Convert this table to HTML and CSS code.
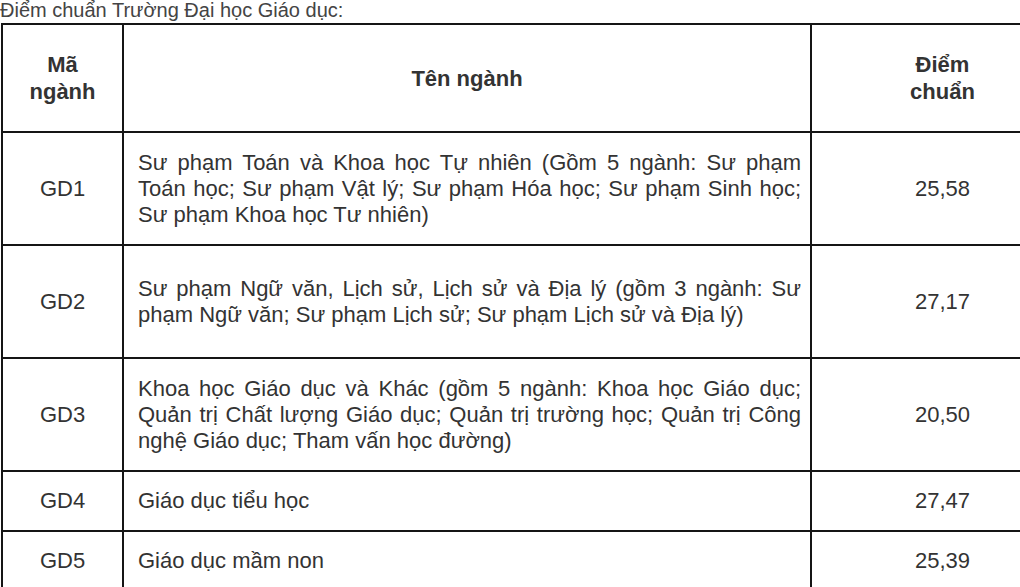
FILE: index.html
```html
<!DOCTYPE html>
<html lang="vi">
<head>
<meta charset="utf-8">
<title>Điểm chuẩn Trường Đại học Giáo dục</title>
<link rel="stylesheet" href="styles.css">
</head>
<body>
<div class="frame">
<p class="caption">Điểm chuẩn Trường Đại học Giáo dục:</p>
<table class="scores">
  <colgroup>
    <col class="c-code">
    <col class="c-name">
    <col class="c-score">
  </colgroup>
  <thead>
    <tr class="r-head">
      <th>Mã<br>ngành</th>
      <th>Tên ngành</th>
      <th>Điểm<br>chuẩn</th>
    </tr>
  </thead>
  <tbody>
    <tr class="r-tall">
      <td class="code">GD1</td>
      <td class="name">Sư phạm Toán và Khoa học Tự nhiên (Gồm 5 ngành: Sư phạm Toán học; Sư phạm Vật lý; Sư phạm Hóa học; Sư phạm Sinh học; Sư phạm Khoa học Tư nhiên)</td>
      <td class="score">25,58</td>
    </tr>
    <tr class="r-tall">
      <td class="code">GD2</td>
      <td class="name">Sư phạm Ngữ văn, Lịch sử, Lịch sử và Địa lý (gồm 3 ngành: Sư phạm Ngữ văn; Sư phạm Lịch sử; Sư phạm Lịch sử và Địa lý)</td>
      <td class="score">27,17</td>
    </tr>
    <tr class="r-tall">
      <td class="code">GD3</td>
      <td class="name">Khoa học Giáo dục và Khác (gồm 5 ngành: Khoa học Giáo dục; Quản trị Chất lượng Giáo dục; Quản trị trường học; Quản trị Công nghệ Giáo dục; Tham vấn học đường)</td>
      <td class="score">20,50</td>
    </tr>
    <tr class="r-short">
      <td class="code">GD4</td>
      <td class="name">Giáo dục tiểu học</td>
      <td class="score">27,47</td>
    </tr>
    <tr class="r-short">
      <td class="code">GD5</td>
      <td class="name">Giáo dục mầm non</td>
      <td class="score">25,39</td>
    </tr>
  </tbody>
</table>
</div>
</body>
</html>
```
FILE: styles.css
```css
html, body {
  margin: 0;
  padding: 0;
  background: #ffffff;
}

body {
  font-family: "Liberation Sans", Arial, sans-serif;
  color: #333333;
}

.frame {
  width: 1020px;
  height: 587px;
  overflow: hidden;
}

.caption {
  margin: 0 0 3px 0;
  font-size: 20px;
  line-height: 20px;
  height: 20px;
  color: #444444;
  white-space: nowrap;
}

.scores {
  border-collapse: collapse;
  table-layout: fixed;
  width: 1072px;
  margin-left: 1px;
  font-size: 22px;
  line-height: 26px;
}

.c-code { width: 121px; }
.c-name { width: 688px; }
.c-score { width: 263px; }

.scores th,
.scores td {
  border: 2px solid #151515;
  vertical-align: middle;
  padding: 0;
}

.scores th {
  font-weight: bold;
  text-align: center;
  line-height: 27px;
  color: #333333;
}

.r-head { height: 108px; }
.r-tall { height: 113px; }
.r-short { height: 60px; }

.code,
.score {
  text-align: center;
}

.scores .name {
  text-align: justify;
  padding: 0 9px 0 14px;
}
```
